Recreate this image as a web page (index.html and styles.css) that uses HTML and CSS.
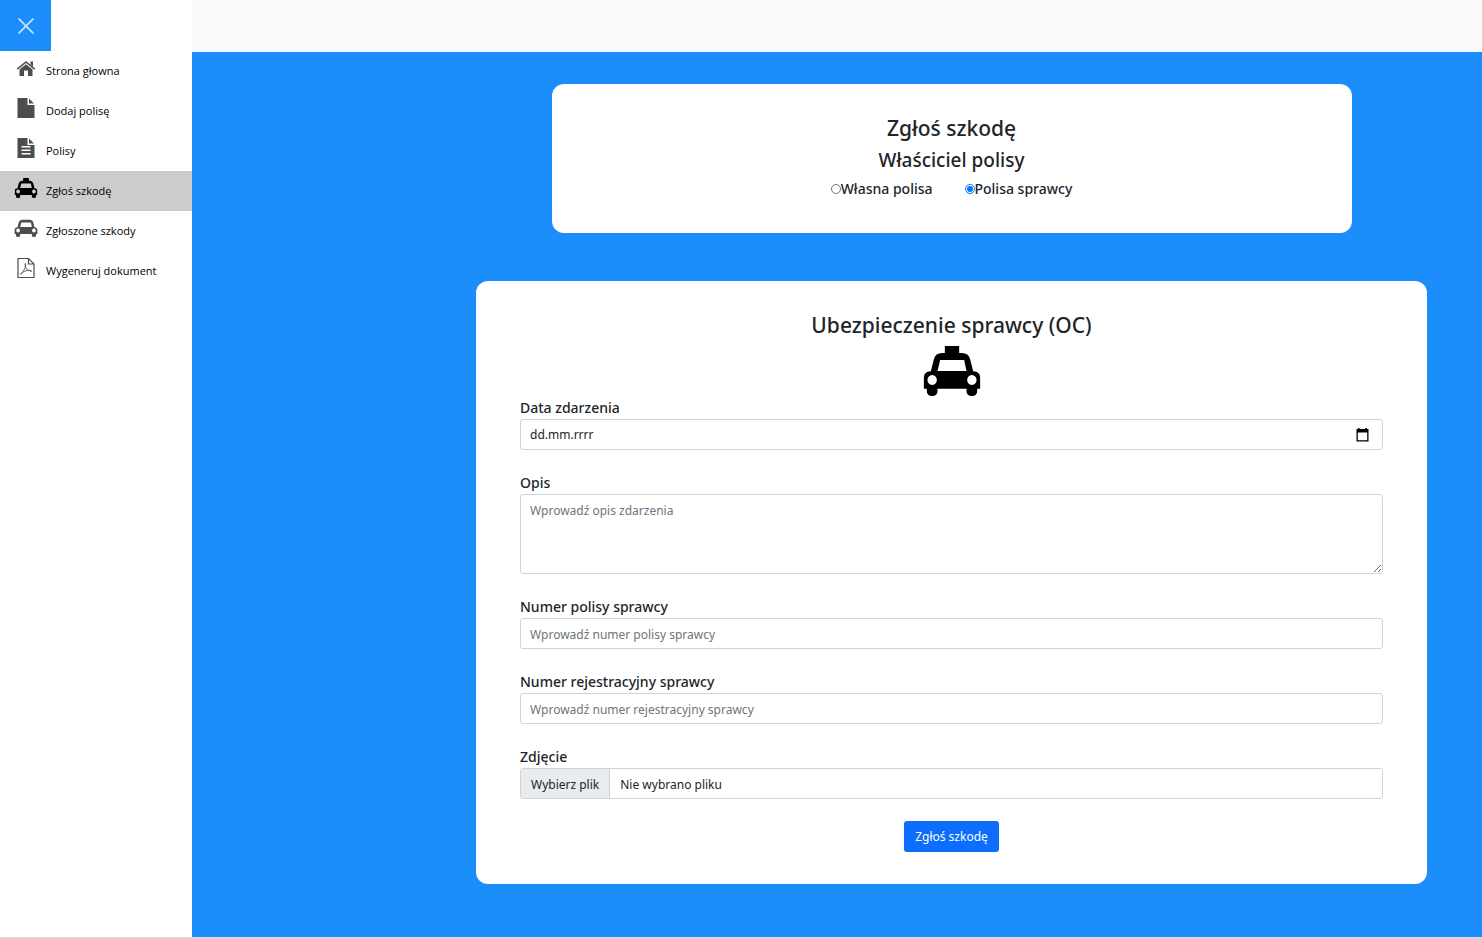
FILE: index.html
```html
<!DOCTYPE html>
<html lang="pl">
<head>
<meta charset="utf-8">
<meta name="viewport" content="width=device-width, initial-scale=1">
<title>Zgłoś szkodę</title>
<link rel="stylesheet" href="styles.css">
</head>
<body>
<svg class="sprite" aria-hidden="true">
  <symbol id="car" viewBox="0 0 171 150">
    <path fill-rule="evenodd" d="M22 76L31 40Q36 21 56 21H115Q135 21 140 40L149 76Q171 77 171 98V128H161V136Q161 150 145 150Q129 150 129 136V128H42V136Q42 150 26 150Q10 150 10 136V128H0V98Q0 77 22 76ZM50 42L42 75H129L122 42ZM26 87a14 15 0 1 0 .1 0ZM145 87a14 15 0 1 0 .1 0Z"/>
  </symbol>
  <symbol id="taxi" viewBox="0 0 171 150">
    <path d="M64 0H107V26H64Z"/>
    <use href="#car" width="171" height="150"/>
  </symbol>
</svg>
<div class="app">
  <aside class="sidebar">
    <button class="close" type="button" aria-label="Zamknij menu">
      <svg width="16" height="16" viewBox="0 0 16 16"><path d="M.5 .5L15.5 15.5M15.5 .5L.5 15.5" fill="none" stroke="#c3e0fe" stroke-width="1.8"/></svg>
    </button>
    <nav class="menu">
      <a class="item" href="#"><svg class="icon" viewBox="0 0 24 24"><path d="M5.5 13.6L12 8.2L18.5 13.6V20H14V14.5H10V20H5.5Z"/><path d="M3.3 13.2L12 6L20.7 13.2" fill="none" stroke="currentColor" stroke-width="1.6"/><path d="M16.5 5.5H19V10.5L16.5 8.4Z"/></svg><span>Strona głowna</span></a>
      <a class="item" href="#"><svg class="icon" viewBox="0 0 24 24"><path d="M3.5 2H13.500V9H20.500V22H3.500ZM15 2.500L20 7.500H15Z"/></svg><span>Dodaj polisę</span></a>
      <a class="item" href="#"><svg class="icon" viewBox="0 0 24 24"><path fill-rule="evenodd" d="M3.500 2H13.500V9H20.500V22H3.500ZM15 2.500L20 7.500H15ZM7.500 10V11.500H16.500V10ZM7.500 13.500V15H16.500V13.500ZM7.500 17V18.500H16.500V17Z"/></svg><span>Polisy</span></a>
      <a class="item active" href="#" aria-current="page"><svg class="icon"><use href="#taxi" width="24" height="20" y="2"/></svg><span>Zgłoś szkodę</span></a>
      <a class="item" href="#"><svg class="icon"><use href="#car" width="24" height="20" y="1"/></svg><span>Zgłoszone szkody</span></a>
      <a class="item" href="#"><svg class="icon" viewBox="0 0 24 24"><g fill="none" stroke="currentColor"><path d="M4 2.500H14.500L20 8V21.500H4ZM14.500 2.500V8H20" stroke-width="1.200"/><path d="M11.300 7.500C10.300 11 13 14 17.500 15.500C18.500 14 12 13.300 7 17.500C6 19 7 19 8.500 16.500C10.500 13.500 12.500 9.500 11.300 7.500Z" stroke-width=".9"/></g></svg><span>Wygeneruj dokument</span></a>
    </nav>
  </aside>
  <div class="page">
    <header class="topbar"></header>
    <main class="content">
      <section class="card owner">
        <h1 class="title">Zgłoś szkodę</h1>
        <h2 class="subtitle">Właściciel polisy</h2>
        <div class="choices">
          <label class="choice"><input type="radio" name="owner">Własna polisa</label>
          <label class="choice"><input type="radio" name="owner" checked>Polisa sprawcy</label>
        </div>
      </section>
      <form class="card claim">
        <h2 class="title">Ubezpieczenie sprawcy (OC)</h2>
        <svg class="taxi" viewBox="0 0 171 150" aria-hidden="true"><use href="#taxi" width="171" height="150"/></svg>
        <div class="field">
          <label for="date">Data zdarzenia</label>
          <div class="control date">
            <input id="date" type="text" placeholder="dd.mm.rrrr">
            <button class="calendar" type="button" aria-label="Wybierz datę"><svg width="13" height="14" viewBox="0 0 13 14"><path fill-rule="evenodd" d="M2 0H3.500V1H9.500V0H11V1H12.500V13.500H.5V1H2ZM1.800 4.500V12.200H11.200V4.500Z"/></svg></button>
          </div>
        </div>
        <div class="field">
          <label for="description">Opis</label>
          <textarea class="control" id="description" placeholder="Wprowadź opis zdarzenia"></textarea>
        </div>
        <div class="field">
          <label for="policy">Numer polisy sprawcy</label>
          <input class="control" id="policy" type="text" placeholder="Wprowadź numer polisy sprawcy">
        </div>
        <div class="field">
          <label for="plate">Numer rejestracyjny sprawcy</label>
          <input class="control" id="plate" type="text" placeholder="Wprowadź numer rejestracyjny sprawcy">
        </div>
        <div class="field">
          <label for="photo">Zdjęcie</label>
          <label class="control file" for="photo">
            <input class="file-input" id="photo" type="file">
            <span class="file-button">Wybierz plik</span>
            <span class="file-name">Nie wybrano pliku</span>
          </label>
        </div>
        <button class="submit" type="submit">Zgłoś szkodę</button>
      </form>
    </main>
  </div>
</div>
</body>
</html>
```
FILE: styles.css
```css
* { box-sizing: border-box; }
body {
  margin: 0;
  color: #212529;
  background: #fff;
  font-family: "Noto Sans", "Open Sans", sans-serif;
  font-size: 12px;
}
button, input, textarea { font: inherit; color: inherit; }
h1, h2 { margin: 0; font-weight: 500; }
.sprite { position: absolute; width: 0; height: 0; }
.app {
  display: flex;
  min-height: 100vh;
  border-bottom: 1px solid #d3dfe9;
}
.sidebar { flex: 0 0 192px; background: #fff; }
.close {
  display: grid;
  place-items: center;
  width: 51px;
  height: 51px;
  padding: 0;
  border: 0;
  background: #1c8efb;
}
.item {
  display: flex;
  align-items: center;
  gap: 8px;
  height: 40px;
  padding: 0 0 2px 14px;
  color: #000;
  font-family: "Open Sans", "Noto Sans", sans-serif;
  font-size: 11px;
  text-decoration: none;
}
.icon {
  width: 24px;
  height: 24px;
  margin-bottom: 4px;
  color: #4d4d4d;
  fill: currentColor;
}
.active { background: #ccc; }
.active .icon { color: #000; }
.page { flex: 1; min-width: 0; display: flex; flex-direction: column; }
.topbar { height: 52px; background: #f8f9fa; }
.content {
  flex: 1;
  display: flex;
  flex-direction: column;
  align-items: center;
  gap: 48px;
  padding: 32px 55px 52px 284px;
  background: #1c8efb;
}
.card { width: 100%; border-radius: 12px; background: #fff; }
.owner { max-width: 800px; padding: 28px 44px 33px; text-align: center; }
.title { font-size: 21px; line-height: 32px; }
.subtitle { font-size: 19px; line-height: 32px; }
.choices {
  display: flex;
  justify-content: center;
  gap: 32px;
  padding-top: 2px;
  font-size: 14px;
  font-weight: 500;
  line-height: 22px;
}
.choice { display: flex; align-items: center; }
.choice input { width: 10px; height: 10px; margin: 0; }
.claim {
  display: flex;
  flex-direction: column;
  align-items: center;
  padding: 28px 44px 32px;
}
.taxi { width: 58px; height: 50px; margin: 5px 0 1px; }
.field {
  display: flex;
  flex-direction: column;
  width: 100%;
  margin-bottom: 22px;
  line-height: 21px;
}
.field > label:first-child {
  font-size: 14px;
  font-weight: 500;
  line-height: 22px;
}
.control {
  width: 100%;
  height: 31px;
  padding: 6px 9px 4px;
  border: 1px solid #ced4da;
  border-radius: 3px;
  background: #fff;
}
.control::placeholder { color: #6c757d; opacity: 1; }
textarea.control { height: 80px; padding-top: 5px; resize: vertical; }
.date { display: flex; align-items: center; padding: 0 13px 0 9px; }
.date input {
  flex: 1;
  min-width: 0;
  padding: 0;
  border: 0;
  outline: 0;
  background: none;
}
.date input::placeholder { color: #212529; opacity: 1; }
.calendar { display: flex; padding: 0; border: 0; background: none; color: #000; }
.file { display: flex; padding: 0; overflow: hidden; }
.file-input { position: absolute; width: 1px; height: 1px; opacity: 0; }
.file-button { padding: 5px 10px; border-right: 1px solid #ced4da; background: #e9ecef; }
.file-name { padding: 5px 10px; }
.submit {
  height: 31px;
  padding: 0 11px;
  border: 0;
  border-radius: 3px;
  background: #0d6efd;
  color: #fff;
}
```
